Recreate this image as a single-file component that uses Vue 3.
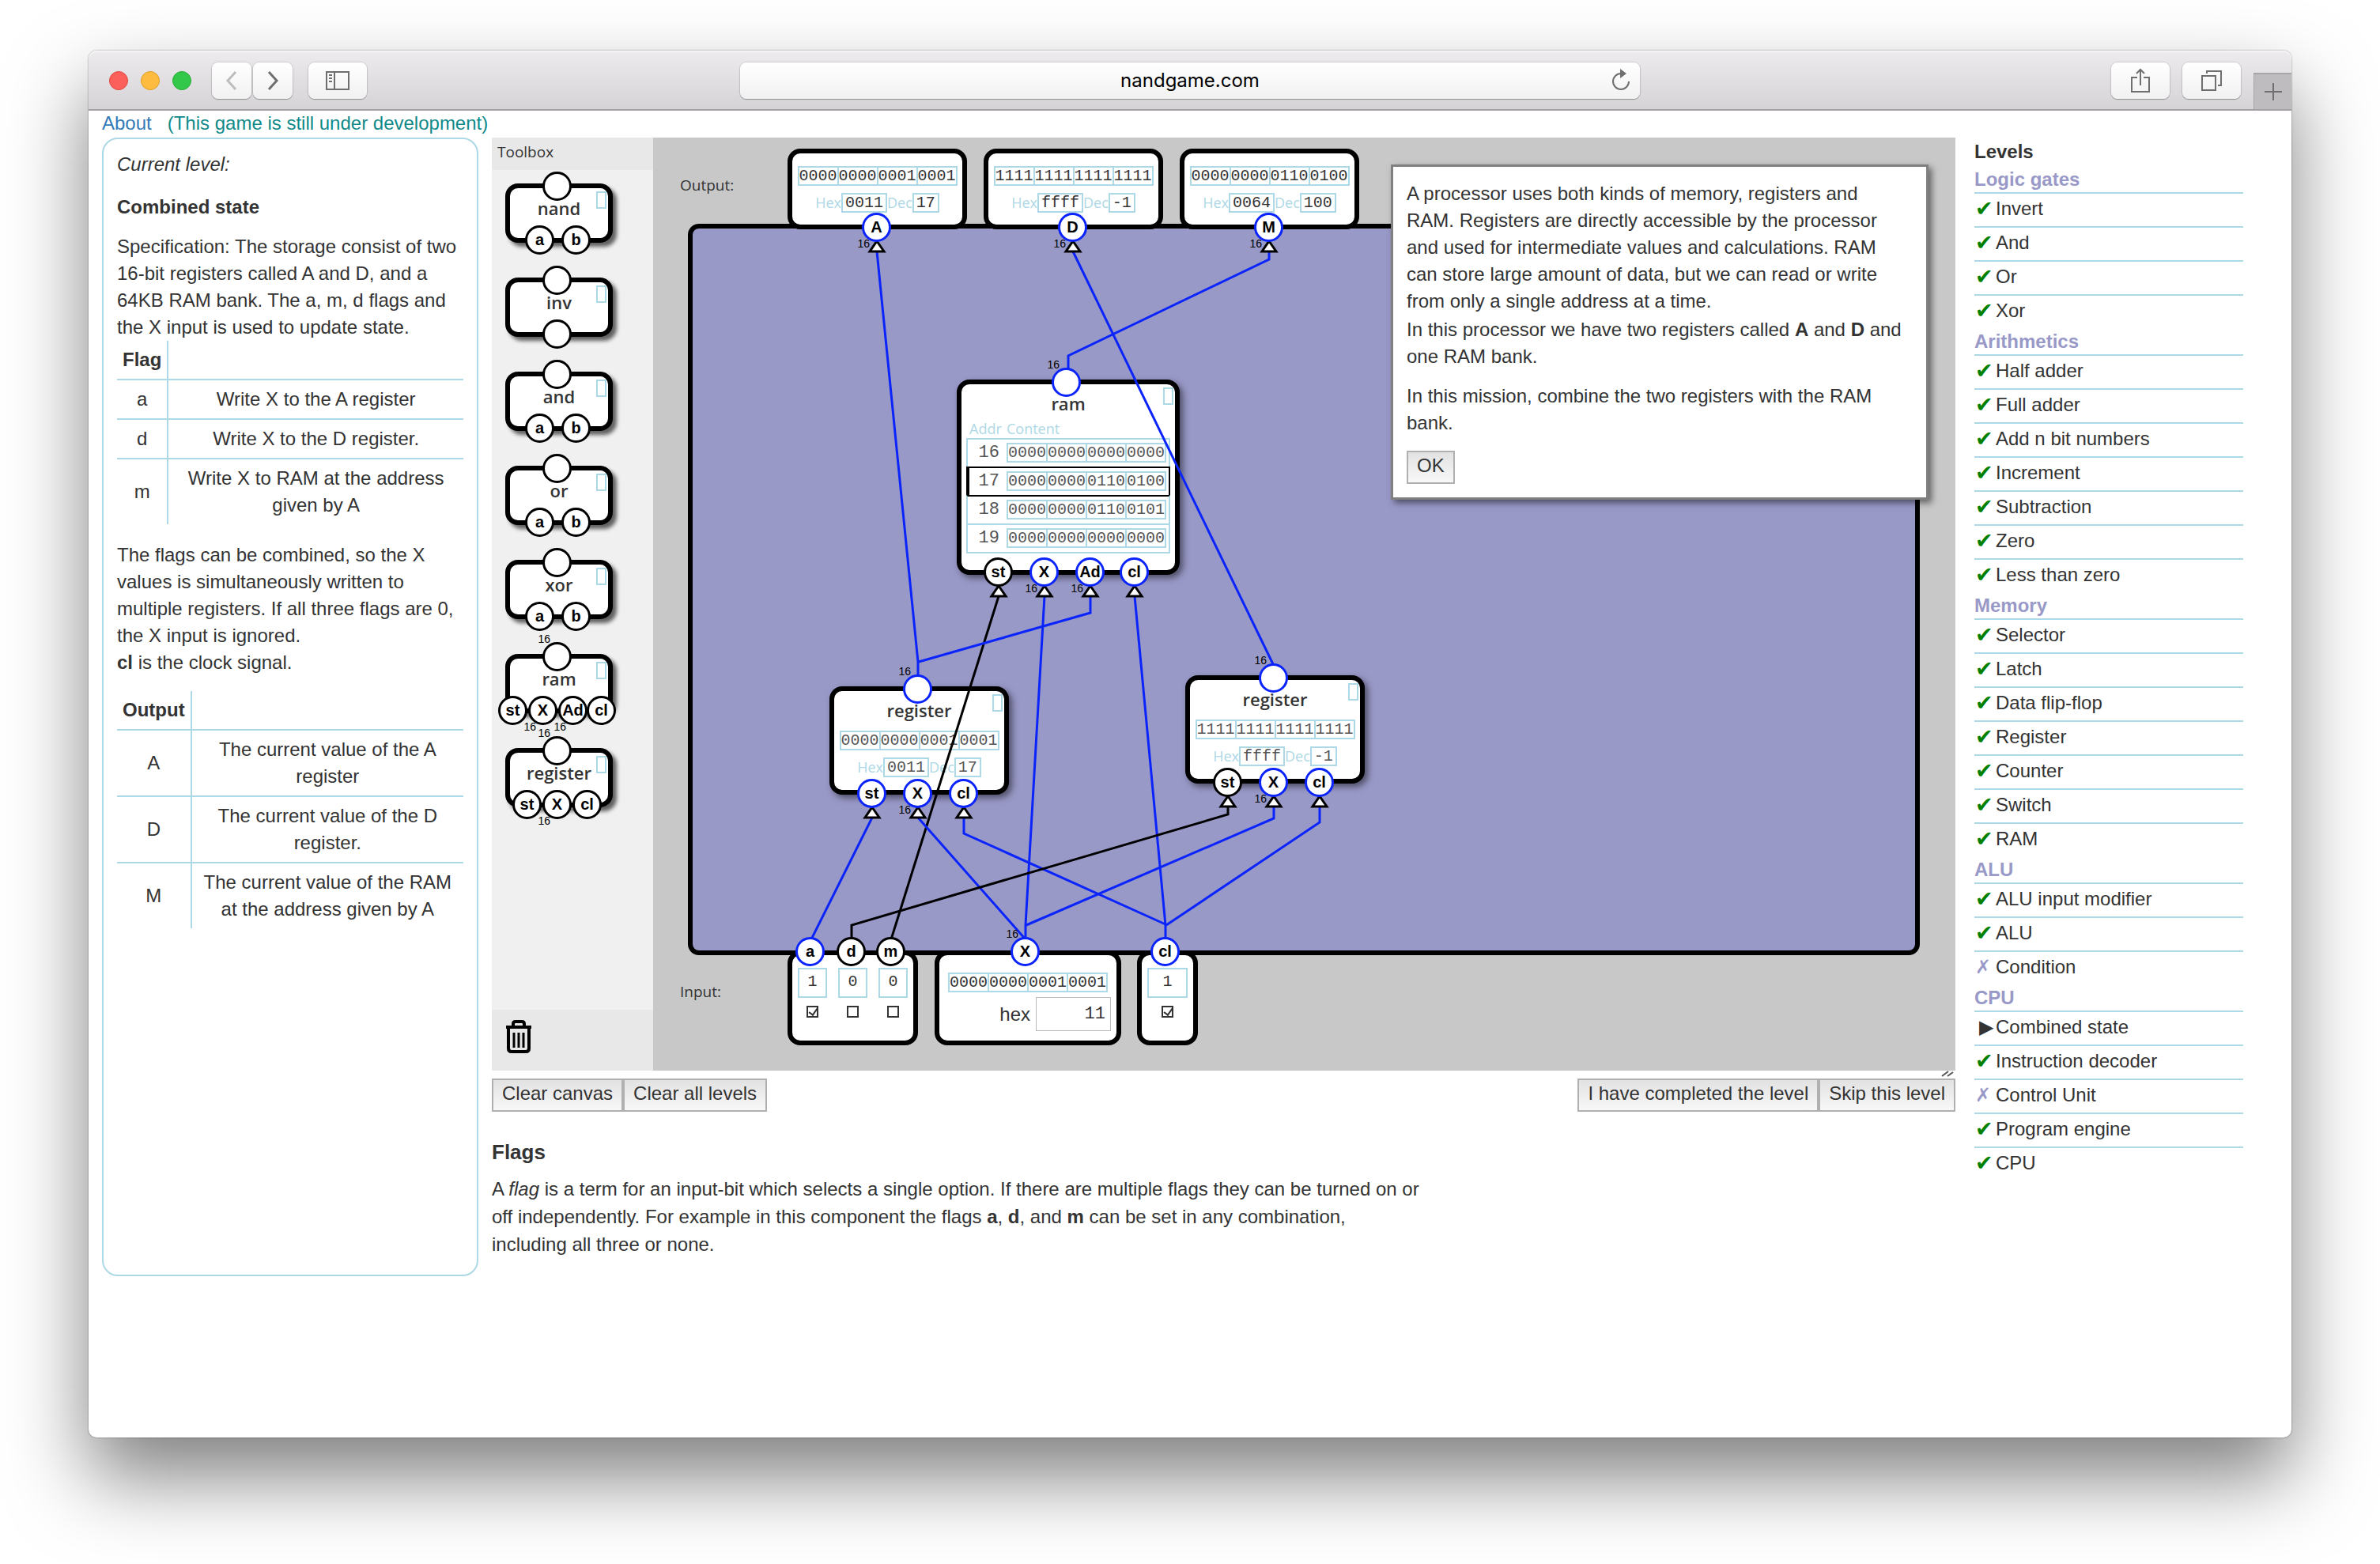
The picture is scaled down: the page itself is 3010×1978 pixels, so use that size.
<script setup>
import { ref } from 'vue'

const bin = (s) => s.match(/.{4}/g)

const tools = [
  { name: 'nand', inputs: [{ l: 'a', x: 44 }, { l: 'b', x: 90 }] },
  { name: 'inv', inputs: [{ l: '', x: 66 }] },
  { name: 'and', inputs: [{ l: 'a', x: 44 }, { l: 'b', x: 90 }] },
  { name: 'or', inputs: [{ l: 'a', x: 44 }, { l: 'b', x: 90 }] },
  { name: 'xor', inputs: [{ l: 'a', x: 44 }, { l: 'b', x: 90 }] },
  {
    name: 'ram',
    wide: true,
    inputs: [{ l: 'st', x: 10 }, { l: 'X', x: 48, wide: true }, { l: 'Ad', x: 86, wide: true }, { l: 'cl', x: 122 }]
  },
  {
    name: 'register',
    wide: true,
    inputs: [{ l: 'st', x: 28 }, { l: 'X', x: 66, wide: true }, { l: 'cl', x: 104 }]
  }
]

const readouts = [
  { id: 'A', x: 170, y: 14, bits: '0000000000010001', hex: '0011', dec: '17' },
  { id: 'D', x: 418, y: 14, bits: '1111111111111111', hex: 'ffff', dec: '-1' },
  { id: 'M', x: 666, y: 14, bits: '0000000001100100', hex: '0064', dec: '100' }
]

const registers = [
  { id: 'r1', x: 223, y: 694, bits: '0000000000010001', hex: '0011', dec: '17' },
  { id: 'r2', x: 673, y: 680, bits: '1111111111111111', hex: 'ffff', dec: '-1' }
]

const ramRows = [
  { addr: 16, bits: '0000000000000000' },
  { addr: 17, bits: '0000000001100100', current: true },
  { addr: 18, bits: '0000000001100101' },
  { addr: 19, bits: '0000000000000000' }
]

const flags = ref([
  { id: 'a', on: true },
  { id: 'd', on: false },
  { id: 'm', on: false }
])
const clock = ref(true)
const hexValue = ref('11')

/* Pins: position is the centre of the circle; arrow marks an input, wide a 16-bit line */
const pins = [
  { id: 'A', l: 'A', x: 283, y: 113, on: true, arrow: true, wide: 'below' },
  { id: 'D', l: 'D', x: 531, y: 113, on: true, arrow: true, wide: 'below' },
  { id: 'M', l: 'M', x: 779, y: 113, on: true, arrow: true, wide: 'below' },
  { id: 'ram', l: '', x: 523, y: 309, on: true, wide: 'above' },
  { id: 'ram-st', l: 'st', x: 437, y: 549, arrow: true },
  { id: 'ram-x', l: 'X', x: 495, y: 549, on: true, arrow: true, wide: 'below' },
  { id: 'ram-ad', l: 'Ad', x: 553, y: 549, on: true, arrow: true, wide: 'below' },
  { id: 'ram-cl', l: 'cl', x: 609, y: 549, on: true, arrow: true },
  { id: 'r1', l: '', x: 335, y: 697, on: true, wide: 'above' },
  { id: 'r1-st', l: 'st', x: 277, y: 829, on: true, arrow: true },
  { id: 'r1-x', l: 'X', x: 335, y: 829, on: true, arrow: true, wide: 'below' },
  { id: 'r1-cl', l: 'cl', x: 393, y: 829, on: true, arrow: true },
  { id: 'r2', l: '', x: 785, y: 683, on: true, wide: 'above' },
  { id: 'r2-st', l: 'st', x: 727, y: 815, arrow: true },
  { id: 'r2-x', l: 'X', x: 785, y: 815, on: true, arrow: true, wide: 'below' },
  { id: 'r2-cl', l: 'cl', x: 843, y: 815, on: true, arrow: true },
  { id: 'in-a', l: 'a', x: 199, y: 1029, on: true },
  { id: 'in-d', l: 'd', x: 251, y: 1029 },
  { id: 'in-m', l: 'm', x: 301, y: 1029 },
  { id: 'in-x', l: 'X', x: 471, y: 1029, on: true, wide: 'above' },
  { id: 'in-cl', l: 'cl', x: 648, y: 1029, on: true }
]

const wires = [
  { p: '283,144 335,663 335,697', on: true },
  { p: '531,144 785,668', on: true },
  { p: '779,144 779,154 525,276 525,300', on: true },
  { p: '437,580 301,1014', on: false },
  { p: '495,580 471,996 471,1020', on: true },
  { p: '553,580 553,601 336,663', on: true },
  { p: '609,580 648,996 648,1020', on: true },
  { p: '277,860 200,1014', on: true },
  { p: '335,860 471,1014', on: true },
  { p: '393,860 393,880 648,995', on: true },
  { p: '727,846 727,856 251,996 251,1020', on: false },
  { p: '785,846 785,861 472,996', on: true },
  { p: '843,846 843,866 649,996', on: true }
]

const levels = [
  { title: 'Logic gates', items: ['+Invert', '+And', '+Or', '+Xor'] },
  {
    title: 'Arithmetics',
    items: ['+Half adder', '+Full adder', '+Add n bit numbers', '+Increment', '+Subtraction', '+Zero', '+Less than zero']
  },
  { title: 'Memory', items: ['+Selector', '+Latch', '+Data flip-flop', '+Register', '+Counter', '+Switch', '+RAM'] },
  { title: 'ALU', items: ['+ALU input modifier', '+ALU', '-Condition'] },
  { title: 'CPU', items: ['>Combined state', '+Instruction decoder', '-Control Unit', '+Program engine', '+CPU'] }
]
const marks = { '+': '✔', '-': '✗', '>': '▶' }
const markClass = { '+': 'done', '-': 'skipped', '>': 'current' }

const at = (o) => ({ left: o.x + 'px', top: o.y + 'px' })
const centred = (x, y) => ({ left: x - 19 + 'px', top: y - 18 + 'px' })
</script>

<template>
  <div class="desktop">
    <div class="window">
      <header class="toolbar">
        <div class="lights"><i class="red"></i><i class="yellow"></i><i class="green"></i></div>
        <div class="nav">
          <button type="button" class="chrome-btn arrow dim" aria-label="Back">
            <svg width="14" height="26" viewBox="0 0 14 26"><path d="M12 2 2 13l10 11" /></svg>
          </button>
          <button type="button" class="chrome-btn arrow" aria-label="Forward">
            <svg width="14" height="26" viewBox="0 0 14 26"><path d="m2 2 10 11L2 24" /></svg>
          </button>
        </div>
        <button type="button" class="chrome-btn side" aria-label="Sidebar">
          <svg width="30" height="24" viewBox="0 0 30 24">
            <path d="M1 1h28v22H1zM11 1v22M4 5h4M4 9h4M4 13h4" />
          </svg>
        </button>
        <div class="address">
          <span>nandgame.com</span>
          <svg class="reload" width="26" height="28" viewBox="0 0 26 28">
            <path d="M13 6A10 10 0 1 0 23 16" />
            <path class="solid" d="M12 0l8 6-8 6z" />
          </svg>
        </div>
        <button type="button" class="chrome-btn share" aria-label="Share">
          <svg width="24" height="32" viewBox="0 0 24 32">
            <path d="M8 12H1v18h22V12h-7M12 22V2M7 7l5-5 5 5" />
          </svg>
        </button>
        <button type="button" class="chrome-btn tabs" aria-label="Show tabs">
          <svg width="26" height="26" viewBox="0 0 26 26">
            <path d="M1 7h17v18H1zM7 4V1h18v18h-4" />
          </svg>
        </button>
        <button type="button" class="new-tab" aria-label="New tab">
          <svg width="24" height="24" viewBox="0 0 24 24"><path d="M12 1v22M1 12h22" /></svg>
        </button>
      </header>

      <div class="page">
        <p class="about">
          <a href="#about">About</a><span>(This game is still under development)</span>
        </p>
        <div class="columns">
          <section class="brief">
            <p class="kicker">Current level:</p>
            <h2>Combined state</h2>
            <p class="text">
              Specification: The storage consist of two 16-bit registers called A and D, and a 64KB RAM bank. The a, m,
              d flags and the X input is used to update state.
            </p>
            <table class="spec">
              <thead>
                <tr><th>Flag</th><th></th></tr>
              </thead>
              <tbody>
                <tr><td>a</td><td>Write X to the A register</td></tr>
                <tr><td>d</td><td>Write X to the D register.</td></tr>
                <tr><td>m</td><td>Write X to RAM at the address given by A</td></tr>
              </tbody>
            </table>
            <p class="text after">
              The flags can be combined, so the X values is simultaneously written to multiple registers. If all three
              flags are 0, the X input is ignored.<br /><b>cl</b> is the clock signal.
            </p>
            <table class="spec">
              <thead>
                <tr><th>Output</th><th></th></tr>
              </thead>
              <tbody>
                <tr><td>A</td><td>The current value of the A register</td></tr>
                <tr><td>D</td><td>The current value of the D register.</td></tr>
                <tr><td>M</td><td>The current value of the RAM at the address given by A</td></tr>
              </tbody>
            </table>
          </section>

          <main class="work">
            <div class="bench">
              <aside class="toolbox">
                <h3>Toolbox</h3>
                <ul class="tools">
                  <li v-for="t in tools" :key="t.name" class="tool">
                    <div class="node tool-body">
                      <span class="name">{{ t.name }}</span><i class="tag"></i>
                    </div>
                    <span class="pin" :style="centred(66, 3)">
                      <small v-if="t.wide" class="above">16</small>
                    </span>
                    <span v-for="p in t.inputs" :key="p.x" class="pin" :style="centred(p.x, 71)">
                      {{ p.l }}<small v-if="p.wide" class="below">16</small>
                    </span>
                  </li>
                </ul>
                <div class="trash">
                  <svg width="36" height="42" viewBox="0 0 36 42">
                    <path d="M2 9h32M11 8V5q0-3 3-3h8q3 0 3 3v3" />
                    <path d="M5 11v25q0 4 4 4h18q4 0 4-4V11" />
                    <path class="bar" d="M12 16v19M18 16v19M24 16v19" />
                  </svg>
                </div>
              </aside>

              <div class="stage">
                <div class="board"></div>
                <span class="caption caption-out">Output:</span>
                <span class="caption caption-in">Input:</span>

                <div v-for="r in readouts" :key="r.id" class="node readout" :style="at(r)">
                  <span class="bits"><span v-for="(b, i) in bin(r.bits)" :key="i">{{ b }}</span></span>
                  <span class="conv">Hex<b>{{ r.hex }}</b>Dec<b>{{ r.dec }}</b></span>
                </div>

                <div class="node part ram" :style="at({ x: 384, y: 306 })">
                  <span class="name">ram</span><i class="tag"></i>
                  <table>
                    <thead>
                      <tr><th>Addr</th><th>Content</th></tr>
                    </thead>
                    <tbody>
                      <tr v-for="r in ramRows" :key="r.addr" :class="{ current: r.current }">
                        <td>{{ r.addr }}</td>
                        <td>
                          <span class="bits"><span v-for="(b, i) in bin(r.bits)" :key="i">{{ b }}</span></span>
                        </td>
                      </tr>
                    </tbody>
                  </table>
                </div>

                <div v-for="r in registers" :key="r.id" class="node part reg" :style="at(r)">
                  <span class="name">register</span><i class="tag"></i>
                  <span class="bits"><span v-for="(b, i) in bin(r.bits)" :key="i">{{ b }}</span></span>
                  <span class="conv">Hex<b>{{ r.hex }}</b>Dec<b>{{ r.dec }}</b></span>
                </div>

                <div class="node source flags" :style="at({ x: 170, y: 1028 })">
                  <label v-for="f in flags" :key="f.id">
                    <span class="value">{{ f.on ? 1 : 0 }}</span>
                    <input v-model="f.on" type="checkbox" :aria-label="f.id" />
                  </label>
                </div>
                <div class="node source word" :style="at({ x: 356, y: 1028 })">
                  <span class="bits"><span v-for="(b, i) in bin('0000000000010001')" :key="i">{{ b }}</span></span>
                  <label>hex<input v-model="hexValue" type="text" /></label>
                </div>
                <div class="node source clock" :style="at({ x: 612, y: 1028 })">
                  <label>
                    <span class="value">{{ clock ? 1 : 0 }}</span>
                    <input v-model="clock" type="checkbox" aria-label="cl" />
                  </label>
                </div>

                <svg class="wires" aria-hidden="true">
                  <polyline v-for="w in wires" :key="w.p" :points="w.p" :class="{ on: w.on }" />
                  <template v-for="p in pins" :key="p.id">
                    <path v-if="p.arrow" :d="`M${p.x} ${p.y + 18}l9 13h-18z`" />
                  </template>
                </svg>

                <span v-for="p in pins" :key="p.id" class="pin" :class="{ on: p.on }" :style="centred(p.x, p.y)">
                  {{ p.l }}<small v-if="p.wide" :class="p.wide">16</small>
                </span>

                <div class="dialog" role="dialog" aria-label="Mission">
                  <p>
                    A processor uses both kinds of memory, registers and RAM. Registers are directly accessible by the
                    processor and used for intermediate values and calculations. RAM can store large amount of data, but
                    we can read or write from only a single address at a time.
                  </p>
                  <p>In this processor we have two registers called <b>A</b> and <b>D</b> and one RAM bank.</p>
                  <p class="mission">In this mission, combine the two registers with the RAM bank.</p>
                  <button type="button" class="btn">OK</button>
                </div>
              </div>
            </div>
            <div class="grip">
              <svg width="16" height="8" viewBox="0 0 16 8"><path d="M1 7 9 1M8 7l7-5" /></svg>
            </div>
            <div class="actions">
              <button type="button" class="btn">Clear canvas</button>
              <button type="button" class="btn">Clear all levels</button>
              <button type="button" class="btn first-right">I have completed the level</button>
              <button type="button" class="btn">Skip this level</button>
            </div>
            <article class="notes">
              <h2>Flags</h2>
              <p>
                A <em>flag</em> is a term for an input-bit which selects a single option. If there are multiple flags
                they can be turned on or off independently. For example in this component the flags <b>a</b>,
                <b>d</b>, and <b>m</b> can be set in any combination, including all three or none.
              </p>
            </article>
          </main>

          <nav class="levels">
            <h2>Levels</h2>
            <template v-for="g in levels" :key="g.title">
              <h3>{{ g.title }}</h3>
              <ul>
                <li v-for="i in g.items" :key="i">
                  <i :class="markClass[i[0]]">{{ marks[i[0]] }}</i>{{ i.slice(1) }}
                </li>
              </ul>
            </template>
          </nav>
        </div>
      </div>
    </div>
  </div>
</template>

<style>
body {
  margin: 0;
  background: #fff;
}
</style>

<style scoped>
* {
  box-sizing: border-box;
}
.desktop {
  display: flex;
  min-height: 100vh;
  padding: 64px 112px 160px;
  overflow: hidden;
  font: 24px/34px "Liberation Sans", Arial, sans-serif;
  color: #333;
}
h2,
h3,
p,
ul {
  margin: 0;
  padding: 0;
}
ul {
  list-style: none;
}
svg {
  display: block;
  fill: none;
}
.window {
  flex: 1;
  display: flex;
  flex-direction: column;
  border-radius: 10px;
  background: #fff;
  box-shadow: 0 0 2px rgba(0, 0, 0, 0.5), 0 50px 100px rgba(0, 0, 0, 0.5);
}

/* browser toolbar */
.toolbar {
  display: flex;
  align-items: center;
  height: 76px;
  padding-top: 2px;
  border-bottom: 2px solid #a3a1a3;
  border-radius: 10px 10px 0 0;
  background: linear-gradient(#edebed, #d5d3d6);
  box-shadow: inset 0 2px #f5f4f5;
}
.lights {
  display: flex;
  gap: 16px;
  margin: 0 26px;
}
.lights i {
  width: 24px;
  height: 24px;
  border-radius: 50%;
}
.red {
  background: #fc605b;
  border: 1px solid #e14640;
}
.yellow {
  background: #fdbc40;
  border: 1px solid #dfa023;
}
.green {
  background: #34c84a;
  border: 1px solid #27aa35;
}
.nav {
  display: flex;
  gap: 2px;
  margin-right: 20px;
}
.chrome-btn,
.address {
  display: flex;
  align-items: center;
  justify-content: center;
  height: 46px;
  padding: 0;
  border: 0;
  border-radius: 8px;
  background: linear-gradient(#fff, #f1f1f1);
  box-shadow: 0 0 1px 1px rgba(0, 0, 0, 0.12), 0 1px 1px rgba(0, 0, 0, 0.25);
}
.chrome-btn svg,
.new-tab svg,
.reload {
  stroke: #6f6f6f;
  stroke-width: 2;
}
.arrow {
  width: 50px;
}
.arrow svg {
  stroke-width: 3;
}
.dim svg {
  stroke: #bdbdbd;
}
.side,
.share,
.tabs {
  width: 74px;
}
.address {
  position: relative;
  width: 1138px;
  margin: 0 auto;
  font-size: 24px;
  font-family: Inter, "Liberation Sans", sans-serif;
  color: #000;
}
.reload {
  position: absolute;
  right: 11px;
  top: 8px;
}
.reload .solid {
  fill: #6f6f6f;
  stroke: none;
}
.share {
  margin-left: 124px;
}
.tabs {
  margin: 0 16px;
}
.new-tab {
  display: flex;
  align-items: center;
  justify-content: center;
  align-self: flex-end;
  width: 48px;
  height: 46px;
  padding: 0;
  border: solid #a8a6a9;
  border-width: 2px 0 0 1px;
  background: #bebcbf;
}

/* page columns */
.page {
  flex: 1;
  padding: 0 61px 0 17px;
}
.about {
  display: flex;
  gap: 20px;
  height: 34px;
  line-height: 32px;
  color: #0f8a8a;
}
.about a {
  color: #337ab7;
  text-decoration: none;
}
.columns {
  display: flex;
  align-items: flex-start;
}
.brief {
  flex: none;
  width: 476px;
  min-height: 1440px;
  margin-right: 17px;
  padding: 15px 17px;
  border: 2px solid #add8e6;
  border-radius: 20px;
}
.brief h2 {
  margin: 20px 0 16px;
  font-size: 24px;
  line-height: 34px;
}
.kicker {
  font-style: italic;
}
.text {
  margin-right: -8px;
}
.after {
  margin: 22px -8px 19px 0;
}
.spec {
  width: 100%;
  border-collapse: collapse;
  text-align: center;
}
.spec th,
.spec td {
  padding: 7px;
  border-top: 2px solid #add8e6;
}
.spec th {
  border-top: 0;
}
.spec th:first-child,
.spec td:first-child {
  width: 1px;
  border-right: 2px solid #add8e6;
}
.work {
  flex: 1;
  min-width: 0;
}
.bench {
  display: flex;
  min-height: 1180px;
}

/* toolbox */
.toolbox {
  flex: none;
  display: flex;
  flex-direction: column;
  width: 204px;
  background: #f0f0f0;
}
.toolbox h3 {
  padding: 1px 7px 6px;
  background: #e8e8e8;
  font: 19px/34px "Open Sans", "Noto Sans", sans-serif;
}
.tools {
  flex: 1;
  display: flex;
  flex-direction: column;
  gap: 44px;
  padding: 17px;
}
.tool {
  position: relative;
  width: 136px;
}
.trash {
  height: 77px;
  padding: 13px 16px;
  background: #e8e8e8;
}
.trash svg {
  stroke: #000;
  stroke-width: 4;
}
.trash .bar {
  stroke-width: 3;
}
.node {
  border: 6px solid #000;
  border-radius: 16px;
  background: #fff;
}
.name {
  font: 600 22px/28px "Open Sans", "Noto Sans", sans-serif;
  text-align: center;
}
.tool-body {
  position: relative;
  display: flex;
  flex-direction: column;
  height: 75px;
  padding-top: 11px;
  box-shadow: 5px 5px 5px rgba(0, 0, 0, 0.6);
}
.tag {
  position: absolute;
  top: 4px;
  right: 2px;
  width: 13px;
  height: 22px;
  border: 2px solid #add8e6;
}
.pin {
  position: absolute;
  width: 37px;
  height: 37px;
  border: 3px solid #000;
  border-radius: 50%;
  background: #fff;
  color: #000;
  font-size: 20px;
  font-weight: bold;
  line-height: 31px;
  text-align: center;
  white-space: nowrap;
}
.pin.on {
  border-color: #0b24fb;
}
.pin small {
  position: absolute;
  right: 24px;
  font-size: 14px;
  font-weight: normal;
  line-height: 16px;
}
.above {
  top: -15px;
}
.below {
  top: 28px;
}

/* circuit canvas */
.stage {
  position: relative;
  flex: 1;
  display: flex;
  background: #c8c8c8;
}
.board {
  flex: 1;
  margin: 109px 45px 146px 44px;
  border: 6px solid #000;
  border-radius: 14px;
  background: #9999c8;
}
.caption {
  position: absolute;
  left: 34px;
  font: 19px/28px "Open Sans", "Noto Sans", sans-serif;
}
.caption-out {
  top: 46px;
}
.caption-in {
  top: 1066px;
}
.stage .node {
  position: absolute;
  display: flex;
  flex-direction: column;
  align-items: center;
}
.readout {
  gap: 9px;
  width: 227px;
  height: 102px;
  padding-top: 16px;
}
.part {
  padding-top: 10px;
  box-shadow: 4px 4px 8px rgba(0, 0, 0, 0.5);
}
.part .name {
  margin-bottom: 3px;
}
.reg {
  gap: 9px;
  width: 227px;
  height: 137px;
}
.part .bits,
.part .conv b {
  color: #555;
}
.bits {
  display: flex;
  width: 202px;
  border: 2px solid #add8e6;
  font: 20px/21px "Liberation Mono", monospace;
}
.bits span {
  flex: 1;
  text-align: center;
}
.bits span + span {
  border-left: 2px solid #add8e6;
}
.conv {
  display: flex;
  color: #add8e6;
  font: 18px/25px "Open Sans", "Noto Sans", sans-serif;
}
.conv b {
  padding: 0 3px;
  border: 2px solid #add8e6;
  color: #333;
  font: 20px/21px "Liberation Mono", monospace;
}
.ram {
  width: 282px;
  height: 247px;
}
.ram .name {
  margin-bottom: 6px;
}
.ram table {
  width: 258px;
  border-spacing: 0;
}
.ram th {
  padding: 0;
  color: #add8e6;
  font: 18px/24px "Open Sans", "Noto Sans", sans-serif;
  text-align: left;
}
.ram th:first-child {
  width: 51px;
  padding-left: 4px;
}
.ram td {
  height: 36px;
  padding: 4px 0 5px;
  border: 0 solid #add8e6;
  border-top-width: 2px;
}
.ram td:first-child {
  padding-right: 9px;
  border-left-width: 2px;
  color: #555;
  font: 22px/25px "Liberation Mono", monospace;
  text-align: right;
}
.ram td:last-child {
  border-right-width: 2px;
}
.ram tr:last-child td {
  border-bottom-width: 2px;
}
.ram .current td {
  border-color: #000;
}
.ram .current td:first-child {
  border-left-width: 4px;
}
.ram .current + tr td {
  border-top-color: #000;
}
.source {
  height: 120px;
  padding: 16px 7px 0;
}
.stage .flags {
  flex-direction: row;
  align-items: flex-start;
  justify-content: space-between;
  width: 165px;
}
.flags label,
.clock label {
  display: flex;
  flex-direction: column;
  align-items: center;
  gap: 10px;
}
.value {
  width: 37px;
  height: 38px;
  border: 2px solid #add8e6;
  font: 20px/32px "Liberation Mono", monospace;
  text-align: center;
}
.clock {
  width: 77px;
}
.clock .value {
  width: 51px;
}
input {
  margin: 0;
  color: #333;
}
input[type="checkbox"] {
  position: relative;
  appearance: none;
  width: 15px;
  height: 15px;
  border: 2px solid #333;
}
input[type="checkbox"]:checked::before {
  content: "";
  position: absolute;
  left: 3px;
  top: -1px;
  width: 5px;
  height: 9px;
  border: solid #333;
  border-width: 0 2px 2px 0;
  transform: rotate(35deg);
}
.word {
  width: 236px;
  padding: 22px 7px 0;
}
.word label {
  display: flex;
  align-items: center;
  align-self: flex-end;
  gap: 7px;
  margin-top: 6px;
}
.word input {
  width: 95px;
  height: 43px;
  padding: 0 6px;
  border: 1px solid #bbb;
  font: 22px/36px "Liberation Mono", monospace;
  text-align: right;
}
.wires {
  position: absolute;
  inset: 0;
  width: 100%;
  height: 100%;
  pointer-events: none;
  stroke: #000;
  stroke-width: 3;
}
.wires .on {
  stroke: #0b24fb;
}
.wires path {
  fill: #fff;
}
.dialog {
  position: absolute;
  top: 34px;
  right: 34px;
  width: 680px;
  padding: 17px 27px 17px 17px;
  border: 3px solid #808080;
  background: #fff;
  box-shadow: 4px 4px 8px rgba(0, 0, 0, 0.5);
}
.dialog p + p {
  margin-top: 2px;
}
.dialog .mission {
  margin: 16px 0 18px;
}
.btn {
  height: 42px;
  padding: 0 11px 4px;
  border: 2px solid #b0b0b0;
  background: linear-gradient(#e2e2e2, #f8f8f8);
  color: #333;
  font: 24px/34px "Liberation Sans", Arial, sans-serif;
}
.grip {
  display: flex;
  justify-content: flex-end;
  height: 10px;
  padding-right: 2px;
}
.grip svg {
  stroke: #555;
  stroke-width: 2;
}
.actions {
  display: flex;
}
.first-right {
  margin-left: auto;
}
.notes {
  max-width: 1177px;
  padding-top: 34px;
  line-height: 35px;
}
.notes h2 {
  margin-bottom: 12px;
  font-size: 26px;
  line-height: 34px;
}

/* level list */
.levels {
  flex: none;
  width: 340px;
  margin-left: 24px;
}
.levels h2 {
  font-size: 24px;
  line-height: 36px;
}
.levels h3 {
  color: #9999c8;
  font-size: 24px;
  line-height: 33px;
}
.levels li {
  display: flex;
  padding: 2px 0 5px;
  border-top: 2px solid #add8e6;
}
.levels i {
  width: 27px;
  padding-left: 1px;
  font-family: "DejaVu Sans", sans-serif;
  font-size: 27px;
  font-style: normal;
}
.levels .done {
  color: #008000;
}
.levels .skipped {
  color: #9999c8;
  font-size: 24px;
}
.levels .current {
  padding-left: 6px;
  font-size: 24px;
}
</style>
